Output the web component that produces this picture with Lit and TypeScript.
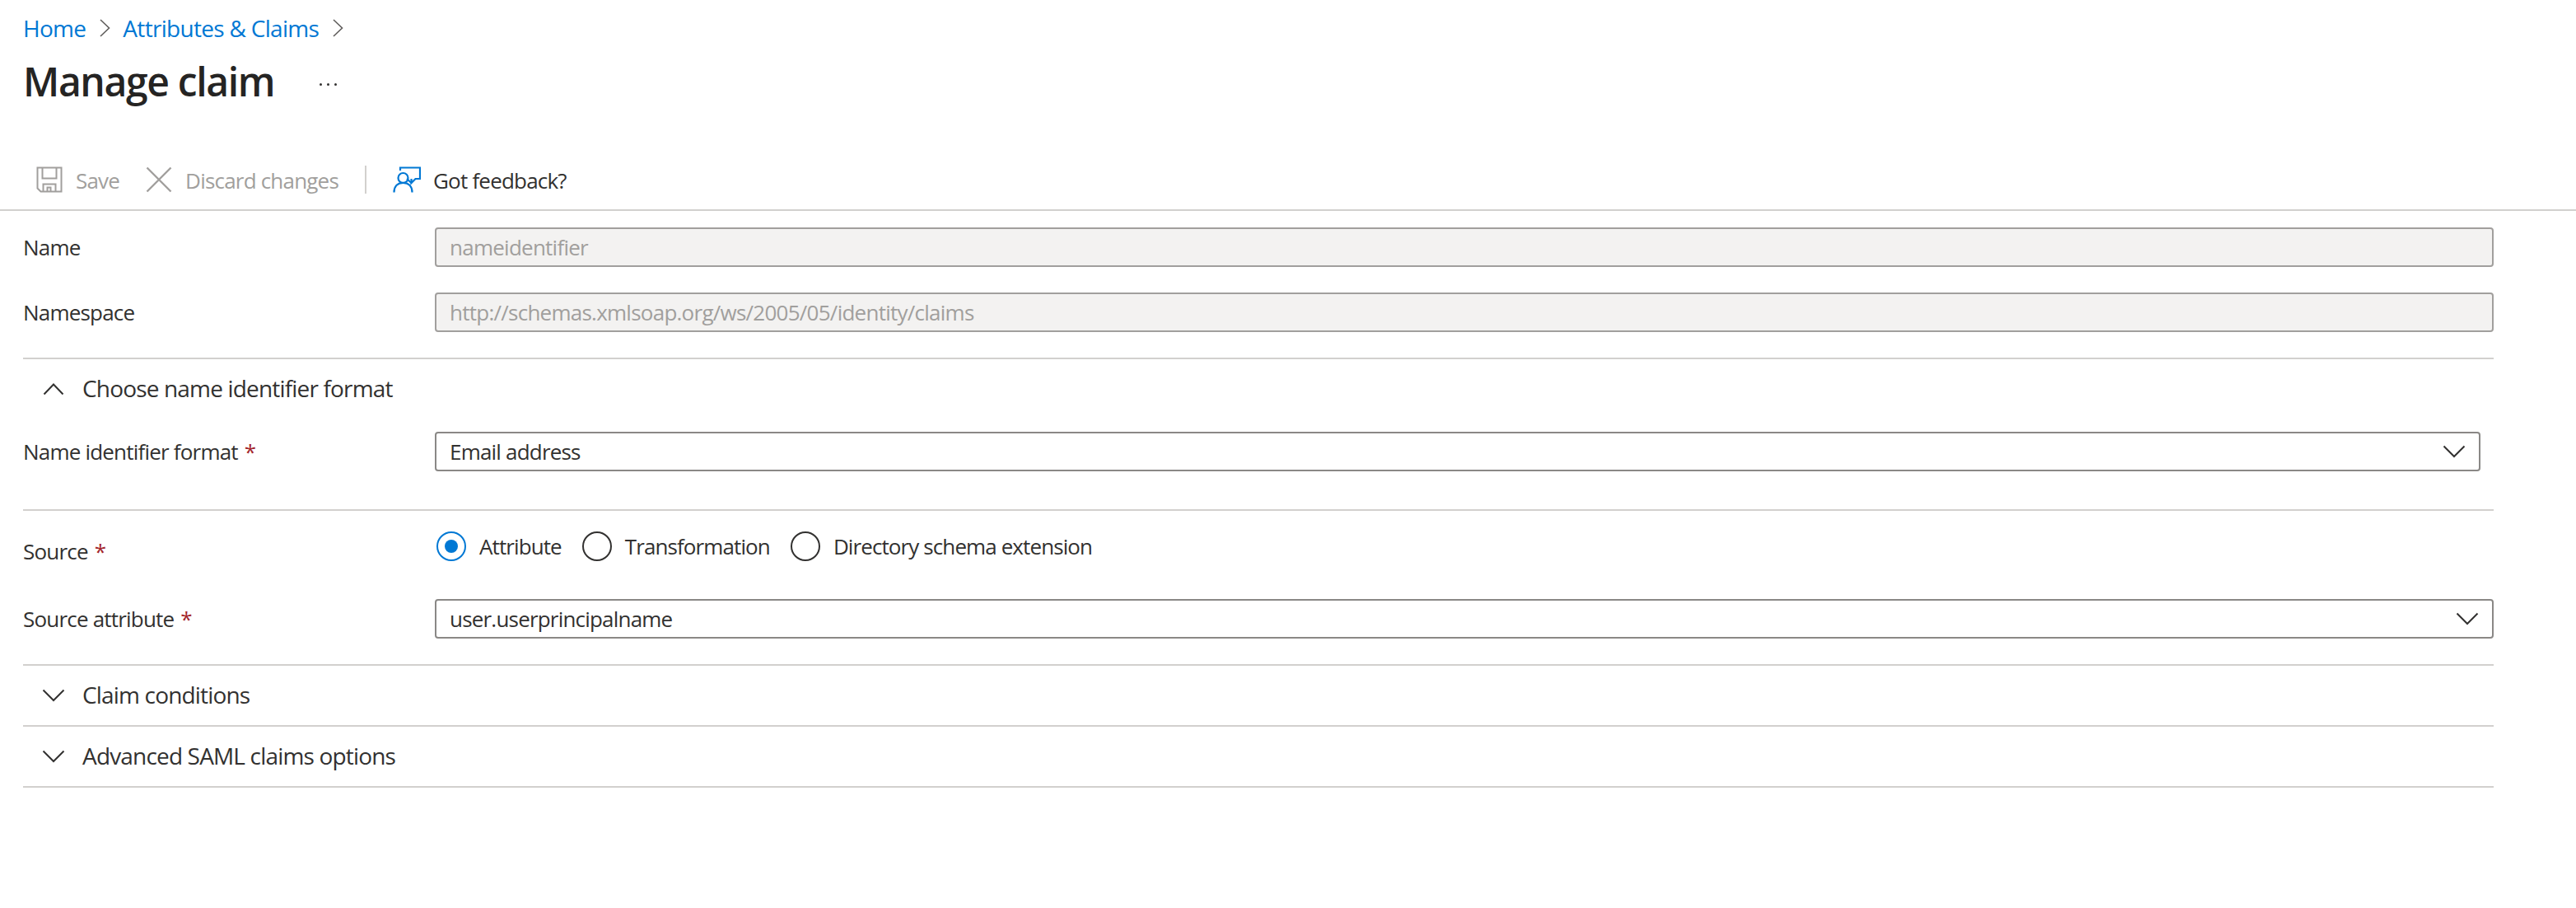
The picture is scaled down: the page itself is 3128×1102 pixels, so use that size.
import { LitElement, html, css } from "lit";
import { customElement } from "lit/decorators.js";

const chevDown = () => html`<svg class="chev" width="28" height="16" viewBox="0 0 28 16" fill="none" stroke="#323130" stroke-width="2"><path d="M1.5 1.5 14 14 26.5 1.5"/></svg>`;
const chevUp = () => html`<svg class="chev" width="28" height="16" viewBox="0 0 28 16" fill="none" stroke="#323130" stroke-width="2"><path d="M2.5 14.5 14 2.5 25.5 14.5"/></svg>`;
const crumbChev = () => html`<svg class="crumb-chev" width="14" height="22" viewBox="0 0 14 22" fill="none" stroke="#605e5c" stroke-width="1.6"><path d="M2 1 12.5 11 2 21"/></svg>`;

@customElement("app-root")
export class AppRoot extends LitElement {
  static styles = css`
    :host { display: block; width: 3128px; height: 1102px; background: #fff; overflow: hidden;
      font-family: "Open Sans", "Liberation Sans", sans-serif; font-size: 26px; color: #323130; letter-spacing: -0.8px; }
    .crumbs { height: 68px; padding-left: 28px; display: flex; align-items: center; font-size: 28px; letter-spacing: -0.7px; color: #0078d4; }
    .crumb-chev { margin: 0 15px 0 16px; }
    .title-row { height: 64px; padding-left: 28px; display: flex; align-items: center; }
    h1 { margin: -2px 0 0; font-size: 48px; font-weight: 600; color: #252423; letter-spacing: -1.35px; line-height: 64px; }
    .more { display: flex; gap: 6px; margin-left: 55px; margin-top: 4px; }
    .more i { width: 3px; height: 3px; border-radius: 50%; background: #323130; }
    .toolbar { margin-top: 52px; height: 70px; border-bottom: 2px solid #d2d0ce; padding-left: 44px; display: flex; align-items: center; }
    .tb { display: flex; align-items: center; }
    .tb svg { display: block; margin-top: -2px; }
    .disabled { color: #a19f9d; }
    .save-t { margin-left: 16px; }
    .disc { margin-left: 32px; }
    .disc-t { margin-left: 16px; }
    .sep { width: 2px; height: 34px; background: #d2d0ce; margin: -2px 32px 0 32px; }
    .fb-t { margin-left: 15px; color: #323130; }
    .form { width: 3000px; margin-left: 28px; }
    .row { display: grid; grid-template-columns: 500px 1fr; align-items: center; min-height: 48px; }
    .r1 { margin-top: 20px; }
    .r2 { margin-top: 31px; }
    .r3 { margin-top: 16px; }
    .r5 { margin-top: 25px; align-items: start; }
    .r6 { margin-top: 34px; }
    .lbl-low { padding-top: 6px; line-height: 36px; }
    .req { color: #a4262c; margin-left: 2px; }
    .field { height: 48px; box-sizing: border-box; border: 2px solid #8a8886; border-radius: 4px; padding: 0 16px; display: flex; align-items: center; justify-content: space-between; background: #fff; }
    .field.off { background: #f3f2f1; border-color: #a19f9d; color: #a19f9d; letter-spacing: -0.75px; }
    .short { margin-right: 16px; }
    .section { border-top: 2px solid #d2d0ce; }
    .s1 { margin-top: 31px; }
    .s2 { margin-top: 46px; }
    .s3 { margin-top: 31px; }
    .sec-head { height: 72px; display: flex; align-items: center; padding-left: 23px; font-size: 28px; letter-spacing: -0.83px; }
    .sec-head .chev { margin-top: -1px; }
    .sec-head span { margin-left: 21px; line-height: 70px; margin-top: -3px; }
    .radios { display: flex; gap: 25px; padding-left: 2px; letter-spacing: -0.9px; }
    .radio { display: flex; align-items: center; gap: 16px; height: 36px; }
    .dot { width: 36px; height: 36px; box-sizing: border-box; border: 2px solid #323130; border-radius: 50%; display: flex; align-items: center; justify-content: center; }
    .dot.on { border-color: #0078d4; }
    .dot.on i { width: 16px; height: 16px; border-radius: 50%; background: #0078d4; }
  `;

  render() {
    return html`
      <div class="crumbs"><span>Home</span>${crumbChev()}<span>Attributes &amp; Claims</span>${crumbChev()}</div>
      <div class="title-row"><h1>Manage claim</h1><div class="more"><i></i><i></i><i></i></div></div>
      <div class="toolbar">
        <div class="tb disabled">
          <svg width="32" height="32" viewBox="0 0 32 32" fill="none" stroke="#a19f9d" stroke-width="2">
            <path d="M1.5 1.5H30.5V30.5H5.5L1.5 26.5Z"/><path d="M7.5 1.5V14.5H24.5V1.5"/><path d="M8.5 30.5V21.5H23.5V30.5"/><path d="M13.5 30.5V25.5H17.5V30.5"/>
          </svg>
          <span class="save-t">Save</span>
        </div>
        <div class="tb disabled disc">
          <svg width="32" height="32" viewBox="0 0 32 32" fill="none" stroke="#a19f9d" stroke-width="2.4"><path d="M1.5 1.5 30.5 30.5M30.5 1.5 1.5 30.5"/></svg>
          <span class="disc-t">Discard changes</span>
        </div>
        <div class="sep"></div>
        <div class="tb">
          <svg width="34" height="32" viewBox="0 0 34 32" fill="none" stroke="#0078d4" stroke-width="2.2">
            <path d="M9 5V1.5H33V15H27.5L22.5 20V15"/><path d="M17 15L22.5 20"/><circle cx="12.5" cy="14" r="6"/><path d="M1.5 31.5C1.5 24 6 19.8 12.5 19.8S23.5 24 23.5 31.5"/>
          </svg>
          <span class="fb-t">Got feedback?</span>
        </div>
      </div>
      <div class="form">
        <div class="row r1"><div>Name</div><div class="field off">nameidentifier</div></div>
        <div class="row r2"><div>Namespace</div><div class="field off">http://schemas.xmlsoap.org/ws/2005/05/identity/claims</div></div>
        <div class="section s1">
          <div class="sec-head">${chevUp()}<span>Choose name identifier format</span></div>
        </div>
        <div class="row r3"><div>Name identifier format <span class="req">*</span></div><div class="field short">Email address ${chevDown()}</div></div>
        <div class="section s2"></div>
        <div class="row r5">
          <div class="lbl-low">Source <span class="req">*</span></div>
          <div class="radios">
            <div class="radio"><div class="dot on"><i></i></div><span>Attribute</span></div>
            <div class="radio"><div class="dot"></div><span>Transformation</span></div>
            <div class="radio"><div class="dot"></div><span>Directory schema extension</span></div>
          </div>
        </div>
        <div class="row r6"><div>Source attribute <span class="req">*</span></div><div class="field">user.userprincipalname ${chevDown()}</div></div>
        <div class="section s3"><div class="sec-head">${chevDown()}<span>Claim conditions</span></div></div>
        <div class="section"><div class="sec-head">${chevDown()}<span>Advanced SAML claims options</span></div></div>
        <div class="section"></div>
      </div>
    `;
  }
}
